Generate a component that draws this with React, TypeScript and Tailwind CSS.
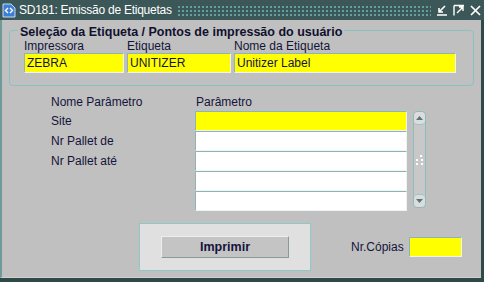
import { useState } from "react";

const Field = ({ value = "", yellow = false, className = "" }: { value?: string; yellow?: boolean; className?: string }) => (
    <div
        className={`h-[20px] flex items-center px-[2px] border border-t-[#8fb4b4] border-l-[#8fb4b4] border-b-[#eef4f4] border-r-[#eef4f4] ${
            yellow ? "bg-[#ffff00]" : "bg-white"
        } ${className}`}
    >
        <span className="leading-none">{value}</span>
    </div>
);

const TitleIcon = () => (
    <svg width="14" height="15" viewBox="0 0 14 15" className="shrink-0">
        <path d="M1 1h8l4 4v9H1z" fill="#3d7fd6" stroke="#c8dcf4" strokeWidth="1" />
        <path d="M6 5L3.5 7.5 6 10M8 5l2.5 2.5L8 10" fill="none" stroke="#fff" strokeWidth="1.4" />
    </svg>
);

const WindowButtons = () => (
    <div className="flex items-center gap-[5px] pr-[3px]">
        <svg width="12" height="12" viewBox="0 0 12 12">
            <path d="M9 2L3 8M3 4v4h4M1 11h10" fill="none" stroke="#fff" strokeWidth="1.6" />
        </svg>
        <svg width="12" height="12" viewBox="0 0 12 12">
            <path d="M1 1.5h10M1 1.5v10M4 9l6-6M6 3h4v4" fill="none" stroke="#fff" strokeWidth="1.4" />
        </svg>
        <svg width="11" height="11" viewBox="0 0 11 11">
            <path d="M1 1l9 9M10 1l-9 9" fill="none" stroke="#fff" strokeWidth="1.7" />
        </svg>
    </div>
);

const ScrollBar = () => (
    <div className="ml-[6px] w-[13px] h-[97px] rounded-[4px] border border-[#8cbcbc] bg-[#c8c8c8] flex flex-col justify-between">
        <div className="h-[13px] rounded-[4px] border-b border-[#9cc4c4] bg-[#dcdcdc] flex items-center justify-center">
            <svg width="7" height="4" viewBox="0 0 7 4">
                <path d="M0 4L3.5 0 7 4z" fill="#587878" />
            </svg>
        </div>
        <div className="flex flex-col items-center gap-[2px]">
            <div className="flex gap-[3px] ml-[3px]">
                <span className="w-[2px] h-[2px] bg-white" />
            </div>
            <div className="flex gap-[3px]">
                <span className="w-[2px] h-[2px] bg-white" />
                <span className="w-[2px] h-[2px] bg-white" />
            </div>
            <div className="flex gap-[3px]">
                <span className="w-[2px] h-[2px] bg-white" />
                <span className="w-[2px] h-[2px] bg-white" />
            </div>
        </div>
        <div className="h-[13px] rounded-[4px] border-t border-[#9cc4c4] bg-[#dcdcdc] flex items-center justify-center">
            <svg width="7" height="4" viewBox="0 0 7 4">
                <path d="M0 0L3.5 4 7 0z" fill="#587878" />
            </svg>
        </div>
    </div>
);

const params = ["Site", "Nr Pallet de", "Nr Pallet até", "", ""];

export default function App() {
    const [copies] = useState("");

    return (
        <div className="w-[484px] h-[282px] flex flex-col bg-[#2f4848] font-['Liberation_Sans',Arial,sans-serif] text-[12px] text-[#14143a] overflow-hidden">
            {/* title bar */}
            <div className="h-[20px] shrink-0 flex items-center bg-[#3b5757] text-white">
                <div className="pl-[2px] pr-[3px] flex items-center">
                    <TitleIcon />
                </div>
                <span className="text-[12px] tracking-[-0.25px] whitespace-nowrap">SD181: Emissão de Etiquetas</span>
                <div className="flex-1 h-[11px] mx-[5px] bg-[radial-gradient(circle,#6fb2b2_0.8px,transparent_1.2px)] bg-[length:4px_4px] opacity-80" />
                <WindowButtons />
            </div>

            {/* window body */}
            <div className="flex-1 flex border-l-2 border-l-[#6f9a9a] mr-[3px] mb-[4px] bg-[#c0c0c0] border-b border-b-[#d0d0d0]">
                <div className="flex-1 flex flex-col pt-[2px]">
                    {/* group box */}
                    <fieldset className="ml-[7px] w-[465px] h-[64px] border border-[#86c2c2] rounded-[4px] pl-[14px]">
                        <legend className="-ml-[6px] px-[2px] font-bold text-[12.5px] text-[#101030] leading-[16px]">
                            <span className="relative top-[2px]">Seleção da Etiqueta / Pontos de impressão do usuário</span>
                        </legend>
                        <div className="flex gap-[3px] mt-[1px]">
                            <div className="w-[100px] flex flex-col">
                                <span className="h-[14px] leading-[14px]">Impressora</span>
                                <Field value="ZEBRA" yellow className="w-[100px]" />
                            </div>
                            <div className="w-[104px] flex flex-col">
                                <span className="h-[14px] leading-[14px]">Etiqueta</span>
                                <Field value="UNITIZER" yellow className="w-[104px]" />
                            </div>
                            <div className="w-[222px] flex flex-col">
                                <span className="h-[14px] leading-[14px]">Nome da Etiqueta</span>
                                <Field value="Unitizer Label" yellow className="w-[222px]" />
                            </div>
                        </div>
                    </fieldset>

                    {/* parameters */}
                    <div className="mt-[9px] flex flex-col">
                        <div className="flex h-[14px] leading-[14px]">
                            <span className="ml-[49px] w-[145px]">Nome Parâmetro</span>
                            <span>Parâmetro</span>
                        </div>
                        <div className="flex mt-[2px]">
                            <div className="flex flex-col">
                                {params.map((p, i) => (
                                    <div key={i} className="flex items-center h-[20px]">
                                        <span className="ml-[49px] w-[144px]">{p}</span>
                                        <Field yellow={i === 0} className="w-[212px] h-[18px]" />
                                    </div>
                                ))}
                            </div>
                            <ScrollBar />
                        </div>
                    </div>

                    {/* footer */}
                    <div className="mt-[12px] flex items-center">
                        <div className="ml-[137px] w-[172px] h-[48px] bg-[#e0e0e0] border border-[#8ccaca] flex items-center justify-center">
                            <button className="w-[128px] h-[22px] bg-[#c4c4c4] border border-t-[#eeeeee] border-l-[#eeeeee] border-b-[#8a9a9a] border-r-[#8a9a9a] font-bold text-[12.5px] text-[#14143a]">
                                Imprimir
                            </button>
                        </div>
                        <span className="ml-[40px]">Nr.Cópias</span>
                        <Field value={copies} yellow className="ml-[5px] w-[53px] h-[20px]" />
                    </div>
                </div>
            </div>
        </div>
    );
}
